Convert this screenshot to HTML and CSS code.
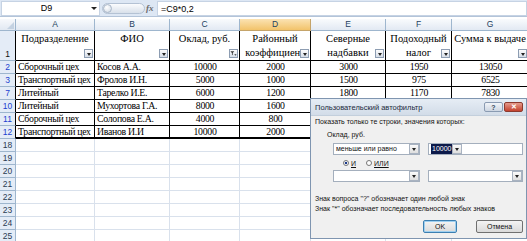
FILE: index.html
```html
<!DOCTYPE html>
<html lang="ru">
<head>
<meta charset="utf-8">
<title>Пользовательский автофильтр</title>
<link rel="stylesheet" href="styles.css">
</head>
<body>
<div class="fbar">
	<div class="namebox"><span>D9</span><i class="nb-arrow"></i></div>
	<div class="pill"><i class="knob"></i></div>
	<div class="fx">fx</div>
	<div class="formula">=C9*0,2</div>
</div>

<div class="sheet">
	<div class="corner"></div>
	<div class="ch">A</div><div class="ch">B</div><div class="ch">C</div><div class="ch sel">D</div><div class="ch">E</div><div class="ch">F</div><div class="ch">G</div>

	<div class="rh top">1</div>
	<div class="th">Подразделение<i class="fb"></i></div>
	<div class="th">ФИО<i class="fb"></i></div>
	<div class="th">Оклад, руб.<i class="fb on"><svg width="9" height="9" viewBox="0 0 9 9"><path d="M0.5 1.5h5l-2 2.2v3l-1-0.6v-2.4z" fill="#333"/><path d="M5.5 5.5h3l-1.5 2z" fill="#333"/></svg></i></div>
	<div class="th">Районный коэффициент<i class="fb"></i></div>
	<div class="th">Северные надбавки<i class="fb"></i></div>
	<div class="th">Подоходный налог<i class="fb"></i></div>
	<div class="th">Сумма к выдаче<i class="fb"></i></div>

	<div class="rh f">2</div>
	<div class="t">Сборочный цех</div><div class="t">Косов А.А.</div><div class="t n">10000</div><div class="t n">2000</div><div class="t n">3000</div><div class="t n">1950</div><div class="t n">13050</div>
	<div class="rh f">3</div>
	<div class="t">Транспортный цех</div><div class="t">Фролов И.Н.</div><div class="t n">5000</div><div class="t n">1000</div><div class="t n">1500</div><div class="t n">975</div><div class="t n">6525</div>
	<div class="rh f">7</div>
	<div class="t">Литейный</div><div class="t">Тарелко И.Е.</div><div class="t n">6000</div><div class="t n">1200</div><div class="t n">1800</div><div class="t n">1170</div><div class="t n">7830</div>
	<!-- E..G этих строк закрыты диалогом -->
	<div class="rh f">10</div>
	<div class="t">Литейный</div><div class="t">Мухортова Г.А.</div><div class="t n">8000</div><div class="t n">1600</div><div class="t"></div><div class="t"></div><div class="t"></div>
	<div class="rh f">11</div>
	<div class="t">Сборочный цех</div><div class="t">Солопова Е.А.</div><div class="t n">4000</div><div class="t n">800</div><div class="t"></div><div class="t"></div><div class="t"></div>
	<div class="rh f">12</div>
	<div class="t b">Транспортный цех</div><div class="t b">Иванов И.И</div><div class="t b n">10000</div><div class="t b n">2000</div><div class="t b"></div><div class="t b"></div><div class="t b"></div>

	<div class="rh">18</div><div class="c"></div><div class="c"></div><div class="c"></div><div class="c"></div><div class="c"></div><div class="c"></div><div class="c"></div>
	<div class="rh">19</div><div class="c"></div><div class="c"></div><div class="c"></div><div class="c"></div><div class="c"></div><div class="c"></div><div class="c"></div>
	<div class="rh">20</div><div class="c"></div><div class="c"></div><div class="c"></div><div class="c"></div><div class="c"></div><div class="c"></div><div class="c"></div>
	<div class="rh">21</div><div class="c"></div><div class="c"></div><div class="c"></div><div class="c"></div><div class="c"></div><div class="c"></div><div class="c"></div>
	<div class="rh">22</div><div class="c"></div><div class="c"></div><div class="c"></div><div class="c"></div><div class="c"></div><div class="c"></div><div class="c"></div>
	<div class="rh">23</div><div class="c"></div><div class="c"></div><div class="c"></div><div class="c"></div><div class="c"></div><div class="c"></div><div class="c"></div>
	<div class="rh">24</div><div class="c"></div><div class="c"></div><div class="c"></div><div class="c"></div><div class="c"></div><div class="c"></div><div class="c"></div>
	<div class="rh">25</div><div class="c"></div><div class="c"></div><div class="c"></div><div class="c"></div><div class="c"></div><div class="c"></div><div class="c"></div>
</div>

<!-- диалог поверх листа -->
<div class="dlg">
	<div class="dlg-title">
		<span class="dlg-name">Пользовательский автофильтр</span>
		<i class="tb help">?</i>
		<i class="tb close">✕</i>
	</div>
	<div class="dlg-body">
		<p class="lbl">Показать только те строки, значения которых:</p>
		<p class="lbl fld">Оклад, руб.</p>
		<div class="crow">
			<div class="combo op"><span>меньше или равно</span><i class="dd"></i></div>
			<div class="combo val"><span class="selv">10000</span><i class="dd"></i></div>
		</div>
		<div class="rrow">
			<span class="opt"><i class="radio on"></i><u>И</u></span>
			<span class="opt"><i class="radio"></i><u>ИЛИ</u></span>
		</div>
		<div class="crow">
			<div class="combo op"><span></span><i class="dd"></i></div>
			<div class="combo val"><span></span><i class="dd"></i></div>
		</div>
		<p class="hint first">Знак вопроса "?" обозначает один любой знак</p>
		<p class="hint">Знак "*" обозначает последовательность любых знаков</p>
		<div class="btns">
			<span class="btn ok">OK</span>
			<span class="btn">Отмена</span>
		</div>
	</div>
</div>
</body>
</html>
```

FILE: styles.css
```css
*{margin:0;padding:0;box-sizing:border-box;}
body{width:527px;height:241px;overflow:hidden;position:relative;background:#fff;font-family:"Liberation Sans",Arial,sans-serif;color:#000;}

/* строка формул */
.fbar{display:flex;align-items:center;height:17px;background:#dde7f4;border-bottom:1px solid #b3c4d9;padding:0 0 0 1px;}
.namebox{display:flex;align-items:center;width:99px;height:15px;background:#fff;border:1px solid #c6d3e4;font-size:9px;}
.namebox span{flex:1;text-align:center;}
.nb-arrow{width:0;height:0;border-left:3px solid transparent;border-right:3px solid transparent;border-top:3px solid #222;margin-right:2px;}
.pill{display:flex;align-items:center;width:43px;height:11px;margin-left:2px;border:1px solid #b4c2d4;border-radius:6px;background:linear-gradient(#fbfcfe,#d8e0ea);}
.knob{width:9px;height:9px;border-radius:50%;border:1px solid #a9b7c9;background:radial-gradient(circle at 40% 35%,#fff,#cfd8e3);}
.fx{width:11px;margin-left:1px;font-family:"Liberation Serif",serif;font-style:italic;font-weight:bold;font-size:9px;color:#6b6b6b;}
.formula{flex:1;height:15px;line-height:14px;background:#fff;border:1px solid #c6d3e4;padding-left:3px;font-size:9px;}

/* лист */
.sheet{display:grid;margin-top:2px;grid-template-columns:16px 79px 75px 70px 71px 75px 66px 77px;grid-template-rows:12px 30px;grid-auto-rows:13px;}
.sheet > div{border-right:1px solid #d9e1ec;border-bottom:1px solid #d9e1ec;overflow:hidden;white-space:nowrap;}
.sheet > .corner{background:linear-gradient(#f7f9fc,#e1e8f2);border-color:#9eb6ce;position:relative;}
.corner:after{content:"";position:absolute;right:1px;bottom:1px;border-left:7px solid transparent;border-bottom:7px solid #c4d2e2;}
.sheet > .ch{background:linear-gradient(#f9fbfd,#e2e9f3);border-color:#9eb6ce;text-align:center;font-size:8.5px;line-height:11px;color:#233f60;}
.sheet > .ch.sel{background:linear-gradient(#fbe3b3,#f2c36a);border-color:#c5a46a;}
.sheet > .rh{display:flex;align-items:center;justify-content:center;background:#e4ecf7;border-color:#9eb6ce;font-size:8.5px;color:#2b3b53;}
.sheet > .rh.top{align-items:flex-end;padding-bottom:1px;color:#111;border-right-color:#000;}
.sheet > .rh.f{color:#1c3fd0;border-right-color:#000;}
.sheet > .th{position:relative;border-right-color:#000;border-bottom-color:#000;font-family:"Liberation Serif",serif;font-size:10.5px;line-height:14px;padding-top:1px;text-align:center;white-space:normal;}
.sheet > .t{border-right-color:#000;border-bottom-color:#000;font-family:"Liberation Serif",serif;font-size:9.8px;letter-spacing:-0.3px;line-height:12px;padding:0 1px 0 2px;}
.sheet > .t.n{text-align:center;}
.sheet > .t.b{border-bottom:2px solid #000;}
.fb{position:absolute;right:1px;bottom:2px;width:9px;height:9px;border:1px solid #8d9db2;background:linear-gradient(#fdfdfd,#d6dde7);display:flex;align-items:center;justify-content:center;}
.fb:after{content:"";border-left:2.5px solid transparent;border-right:2.5px solid transparent;border-top:3px solid #222;margin-top:1px;}
.fb.on:after{display:none;}
.fb svg{display:block;width:7px;height:7px;}

/* диалог */
.dlg{position:absolute;left:310px;top:98px;width:217px;height:141px;background:#f0f0f0;border:1px solid #7f95b0;font-size:7px;color:#111;}
.dlg-title{display:flex;align-items:center;height:17px;padding:0 3px 0 4px;background:linear-gradient(#e6edf5,#d2dce8);border-bottom:1px solid #c3cfdc;}
.dlg-name{flex:1;font-size:7.5px;color:#1b2a3c;}
.tb{display:flex;align-items:center;justify-content:center;width:19px;height:10px;border:1px solid #8a9bb2;border-radius:2px;font-style:normal;font-size:7px;font-weight:bold;}
.help{background:linear-gradient(#f1f4f8,#cdd6e2);color:#384a60;margin-right:1px;}
.close{background:linear-gradient(#e59a8c,#c4412d);border-color:#8c3a2e;color:#fff;}
.dlg-body{padding:1px 3px 0 4px;}
.lbl,.hint{height:10px;line-height:10px;}
.fld{margin-top:3px;padding-left:12px;}
.crow{display:flex;gap:8px;margin-top:3px;padding-left:18px;}
.combo{display:flex;align-items:center;height:12px;background:#fff;border:1px solid #a4afbd;padding-left:2px;}
.combo span{flex:1;line-height:10px;}
.combo.op{width:87px;}
.combo.val{width:95px;}
.selv{flex:none !important;background:#0c1a4a;color:#fff;padding:0 1px;}
.dd{display:flex;align-items:center;justify-content:center;width:10px;height:10px;border:1px solid #a9b3c1;background:linear-gradient(#fbfbfb,#dedede);}
.dd:after{content:"";border-left:2.5px solid transparent;border-right:2.5px solid transparent;border-top:3px solid #222;}
.rrow{display:flex;gap:10px;height:12px;align-items:center;margin-top:2px;padding-left:28px;}
.rrow + .crow{margin-top:1px;}
.opt{display:flex;align-items:center;gap:2px;}
.opt u{text-decoration:underline;}
.radio{width:6px;height:6px;border-radius:50%;border:1px solid #777;background:#fff;}
.radio.on{background:radial-gradient(circle,#1b3a8c 0 1.3px,#fff 1.6px);}
.hint.first{margin-top:12px;}
.btns{display:flex;justify-content:flex-end;gap:19px;margin-top:6px;}
.btn{display:flex;align-items:center;justify-content:center;height:13px;width:47px;border:1px solid #707070;border-radius:2px;background:linear-gradient(#f4f4f4,#dadada);}
.btn.ok{width:34px;border-color:#3c7fb1;box-shadow:inset 0 0 0 1px #9fd0f0;}
```
